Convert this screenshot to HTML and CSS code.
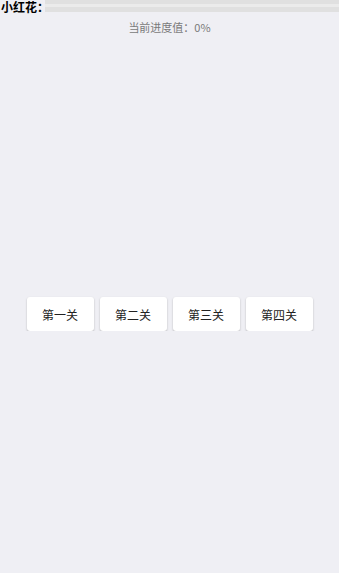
FILE: index.html
```html
<!DOCTYPE html>
<html lang="zh-CN">
<head>
    <meta charset="UTF-8">
    <meta name="viewport" content="width=device-width, initial-scale=1.0">
    <title>小红花</title>
    <link rel="stylesheet" href="styles.css">
</head>
<body>
    <div class="container">
        <div class="progress-row">
            <div class="progress-label">小红花：</div>
            <div class="progress-bar">
                <div class="progress-fill" style="width: 0%"></div>
            </div>
        </div>
        <div class="progress-text">当前进度值：0%</div>
        <div class="levels">
            <button class="level-btn">第一关</button>
            <button class="level-btn">第二关</button>
            <button class="level-btn">第三关</button>
            <button class="level-btn">第四关</button>
        </div>
    </div>
</body>
</html>
```

FILE: styles.css
```css
body {
    background-color: #efeff4;
    color: #000000;
    font-family: 'Noto Sans CJK SC', 'Noto Sans', sans-serif;
    margin: 0;
    padding: 0;
}

.container {
    display: flex;
    flex-direction: column;
    width: 100%;
}

.progress-row {
    display: flex;
    align-items: flex-start;
    height: 14px;
}

.progress-label {
    font-size: 12px;
    font-weight: bold;
    line-height: 14px;
    padding-left: 1px;
    width: 44px;
    white-space: nowrap;
}

.progress-bar {
    flex-grow: 1;
    height: 12px;
    background: linear-gradient(#e0e0e0 0, #e0e0e0 4px, #ebebeb 4px, #ebebeb 7px, #e0e0e0 7px);
}

.progress-fill {
    height: 100%;
    background-color: #e57373;
}

.progress-text {
    font-size: 11px;
    color: #7a7a7a;
    text-align: center;
    margin-top: 6px;
    line-height: 14px;
}

.levels {
    display: flex;
    justify-content: center;
    gap: 6px;
    margin-top: 263px;
}

.level-btn {
    width: 67px;
    height: 34px;
    background-color: #ffffff;
    border: none;
    border-radius: 3px;
    box-shadow: 0 1px 2px rgba(0, 0, 0, 0.25);
    font-family: 'Noto Sans CJK SC', sans-serif;
    font-size: 12px;
    color: #222222;
    padding: 0;
}
```
